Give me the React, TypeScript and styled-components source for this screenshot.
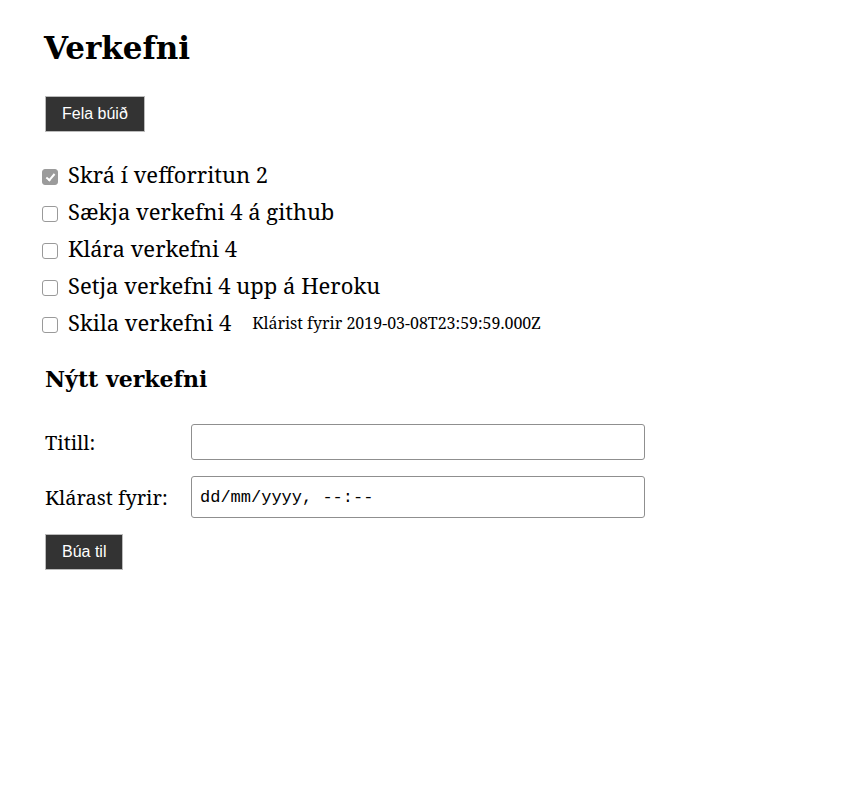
import React from "react";
import styled, { createGlobalStyle } from "styled-components";

const Global = createGlobalStyle`
  body { margin: 0; background: #fff; font-family: "Noto Serif", Georgia, serif; color: #000; }
`;

const Page = styled.main`
  padding: 26px 44px;
`;

const Title = styled.h1`
  font-family: "DejaVu Serif", Georgia, serif;
  font-size: 31px;
  font-weight: bold;
  line-height: 40px;
  margin: 2px 0 28px;
`;

const Button = styled.button`
  display: block;
  align-self: flex-start;
  background: #333;
  color: #fff;
  font-family: "Liberation Sans", Arial, sans-serif;
  font-size: 16px;
  border: 1px solid #bbb;
  padding: 0 16px;
  height: 36px;
  margin-left: 1px;
`;

const List = styled.ul`
  list-style: none;
  margin: 26px 0 0;
  padding: 0;
  display: flex;
  flex-direction: column;
  gap: 6px;
`;

const Row = styled.li`
  display: flex;
  align-items: center;
  font-size: 22px;
  height: 31px;
`;

const Box = styled.input`
  appearance: none;
  -webkit-appearance: none;
  box-sizing: border-box;
  width: 16px;
  height: 16px;
  margin: 6px 10px 0 -2px;
  border: 1px solid #9a9a9a;
  border-radius: 3px;
  background: #fff;
  position: relative;
  flex: none;
  &:checked {
    background: #9b9b9b;
    border-color: #9b9b9b;
  }
  &:checked::after {
    content: "";
    position: absolute;
    left: 5px;
    top: 2px;
    width: 3px;
    height: 7px;
    border: solid #fff;
    border-width: 0 2px 2px 0;
    transform: rotate(40deg);
  }
`;

const Due = styled.span`
  font-size: 16px;
  margin-left: 21px;
  margin-top: 3px;
`;

const SubTitle = styled.h2`
  font-family: "DejaVu Serif", Georgia, serif;
  font-size: 22px;
  font-weight: bold;
  margin: 26px 0 29px 1px;
  line-height: 32px;
`;

const Form = styled.form`
  display: flex;
  flex-direction: column;
  gap: 16px;
`;

const Field = styled.label`
  display: grid;
  grid-template-columns: 146px 454px;
  align-items: center;
  font-size: 20px;
  padding-left: 1px;
`;

const TextInput = styled.input<{ $h: number }>`
  box-sizing: border-box;
  height: ${(p) => p.$h}px;
  width: 454px;
  border: 1px solid #8f8f8f;
  border-radius: 3px;
  padding: 0 8px;
  font-family: "Liberation Mono", "Courier New", monospace;
  font-size: 17px;
  color: #000;
  background: #fff;
  &::placeholder { color: #000; }
`;

const tasks = [
  { title: "Skrá í vefforritun 2", done: true },
  { title: "Sækja verkefni 4 á github", done: false },
  { title: "Klára verkefni 4", done: false },
  { title: "Setja verkefni 4 upp á Heroku", done: false },
  { title: "Skila verkefni 4", done: false, due: "2019-03-08T23:59:59.000Z" },
];

export default function App() {
  return (
    <>
      <Global />
      <Page>
        <Title>Verkefni</Title>
        <Button type="button">Fela búið</Button>
        <List>
          {tasks.map((t) => (
            <Row key={t.title}>
              <Box type="checkbox" defaultChecked={t.done} />
              {t.title}
              {t.due && <Due>Klárist fyrir {t.due}</Due>}
            </Row>
          ))}
        </List>
        <SubTitle>Nýtt verkefni</SubTitle>
        <Form onSubmit={(e) => e.preventDefault()}>
          <Field>
            Titill:
            <TextInput $h={36} type="text" />
          </Field>
          <Field>
            Klárast fyrir:
            <TextInput $h={42} type="text" placeholder="dd/mm/yyyy, --:--" />
          </Field>
          <Button type="submit">Búa til</Button>
        </Form>
      </Page>
    </>
  );
}
